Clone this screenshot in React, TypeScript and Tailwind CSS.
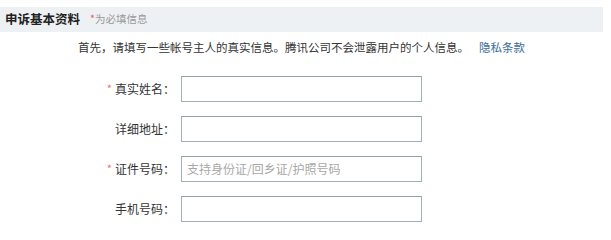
import React from "react";

const font = { fontFamily: '"Noto Sans CJK SC", "Noto Sans", sans-serif' };

function Row({ label, required, placeholder }: { label: string; required?: boolean; placeholder?: string }) {
  return (
    <div className="flex items-center h-[26px]">
      <div className="w-[175px] flex justify-end items-center text-[12px] text-[#333] leading-none">
        {required && <span className="text-[#e07a7a] text-[11px] mr-[3px] relative top-[-1px]">*</span>}
        <span>{label}：</span>
      </div>
      <div className="ml-[6px] w-[241px] h-[26px] border border-[#9fb1b4] border-t-[#8fa2a6] bg-white flex items-center pl-[5px] text-[12px] text-[#a8a8a8]">
        {placeholder}
      </div>
    </div>
  );
}

export default function App() {
  return (
    <div className="w-[611px] h-[240px] bg-white" style={font}>
      <div className="pt-[7px]">
        <div className="w-[603px] h-[25px] bg-[#eef1f4] flex items-center pl-[5px]">
          <span className="text-[12.5px] font-bold text-[#222] leading-none">申诉基本资料</span>
          <span className="ml-[10px] text-[10.5px] text-[#999] leading-none">
            <span className="text-[#e06060]">*</span>为必填信息
          </span>
        </div>
      </div>
      <div className="mt-[7px] h-[18px] flex items-center pl-[78px] text-[11.5px] text-[#333] leading-none">
        <span>首先，请填写一些帐号主人的真实信息。腾讯公司不会泄露用户的个人信息。</span>
        <span className="ml-[10px] text-[#3b6b96]">隐私条款</span>
      </div>
      <div className="mt-[19px] flex flex-col gap-[14px]">
        <Row label="真实姓名" required />
        <Row label="详细地址" />
        <Row label="证件号码" required placeholder="支持身份证/回乡证/护照号码" />
        <Row label="手机号码" />
      </div>
    </div>
  );
}
